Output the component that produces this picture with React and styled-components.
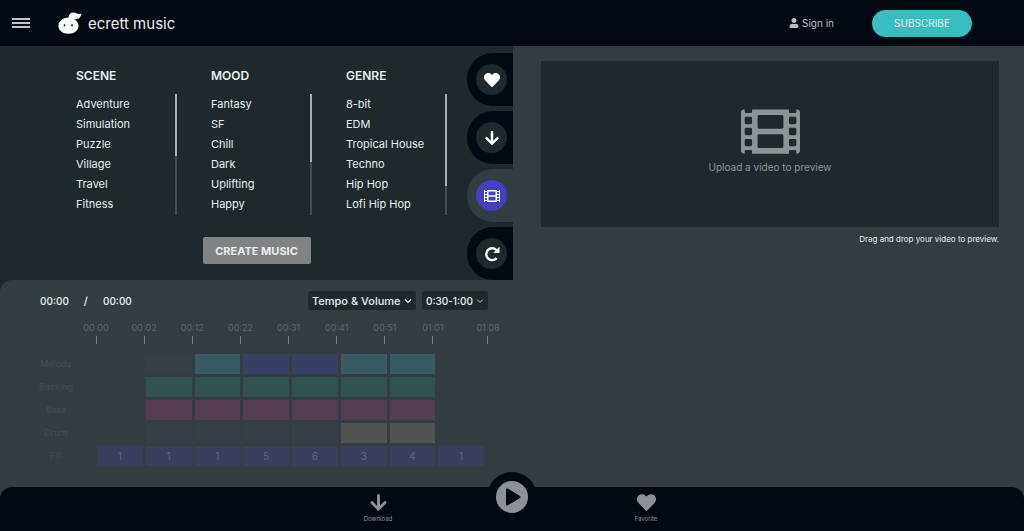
import React from "react";
import styled, { createGlobalStyle } from "styled-components";
import { FaHeart, FaArrowDown, FaFilm, FaUser, FaChevronDown } from "react-icons/fa";

const filters = [
  {
    title: "SCENE",
    thumb: 51,
    items: ["Adventure", "Simulation", "Puzzle", "Village", "Travel", "Fitness"],
  },
  {
    title: "MOOD",
    thumb: 56,
    items: ["Fantasy", "SF", "Chill", "Dark", "Uplifting", "Happy"],
  },
  {
    title: "GENRE",
    thumb: 76,
    items: ["8-bit", "EDM", "Tropical House", "Techno", "Hip Hop", "Lofi Hip Hop"],
  },
];

const marks = ["00:00", "00:02", "00:12", "00:22", "00:31", "00:41", "00:51", "01:01", "01:08"];

const off = "#373d45";
const teal = "#375b60";
const blue = "#393e63";
const green = "#31524c";
const pink = "#543c51";
const olive = "#505350";

const tracks = [
  { name: "Melody", cells: [null, off, teal, blue, blue, teal, teal, null] },
  { name: "Backing", cells: [null, green, green, green, green, green, green, null] },
  { name: "Bass", cells: [null, pink, pink, pink, pink, pink, pink, null] },
  { name: "Drum", cells: [null, off, off, off, off, olive, olive, null] },
];

const fills = ["1", "1", "1", "5", "6", "3", "4", "1"];

export default function App() {
  return (
    <Page>
      <GlobalStyle />
      <Header>
        <MenuButton aria-label="Menu">
          <span />
          <span />
          <span />
        </MenuButton>
        <Brand href="#">
          <Logo />
          ecrett music
        </Brand>
        <SignIn href="#">
          <FaUser />
          Sign in
        </SignIn>
        <Subscribe>SUBSCRIBE</Subscribe>
      </Header>
      <Main>
        <Left>
          <Picker>
            <Filters>
              {filters.map((filter) => (
                <Filter key={filter.title}>
                  <h2>{filter.title}</h2>
                  <div className="body">
                    <ul>
                      {filter.items.map((item) => (
                        <li key={item}>{item}</li>
                      ))}
                    </ul>
                    <ScrollTrack>
                      <div style={{ height: `${filter.thumb}%` }} />
                    </ScrollTrack>
                  </div>
                </Filter>
              ))}
              <CreateButton>CREATE MUSIC</CreateButton>
            </Filters>
            <Tabs>
              <Tab aria-label="Favorites">
                <span><FaHeart /></span>
              </Tab>
              <Tab aria-label="Downloads">
                <span><FaArrowDown /></span>
              </Tab>
              <Tab aria-label="Video" $active>
                <span><FaFilm /></span>
              </Tab>
              <Tab aria-label="History">
                <span><RedoIcon /></span>
              </Tab>
            </Tabs>
          </Picker>
          <Editor>
            <Controls>
              <time>00:00</time>
              <span>/</span>
              <time>00:00</time>
              <Selects>
                <SelectBox $wide>
                  <select aria-label="Edit mode" defaultValue="tempo">
                    <option value="tempo">Tempo &amp; Volume</option>
                  </select>
                  <FaChevronDown />
                </SelectBox>
                <SelectBox>
                  <select aria-label="Length" defaultValue="short">
                    <option value="short">0:30-1:00</option>
                  </select>
                  <ThinChevron />
                </SelectBox>
              </Selects>
            </Controls>
            <Ruler>
              {marks.map((mark) => (
                <span key={mark}>{mark}</span>
              ))}
            </Ruler>
            <Tracks>
              {tracks.map((track) => (
                <Track key={track.name}>
                  <TrackName>{track.name}</TrackName>
                  {track.cells.map((color, i) => (
                    <Cell key={i} $color={color} />
                  ))}
                </Track>
              ))}
              <Track>
                <TrackName>Fill</TrackName>
                {fills.map((fill, i) => (
                  <Cell key={i} $color="#3b3e5a">{fill}</Cell>
                ))}
              </Track>
            </Tracks>
          </Editor>
        </Left>
        <Right>
          <DropZone>
            <FaFilm />
            Upload a video to preview
          </DropZone>
          <p>Drag and drop your video to preview.</p>
        </Right>
      </Main>
      <Player>
        <PlayerButton>
          <FaArrowDown />
          Download
        </PlayerButton>
        <PlayButton aria-label="Play">
          <svg viewBox="0 0 32 32">
            <circle cx="16" cy="16" r="16" fill="#8d9196" />
            <path d="M10 8.500v15c0 .9.900 1.300 1.600.9l12.400-7.500c.7-.4.7-1.400 0-1.800l-12.400-7.500c-.7-.4-1.600 0-1.600.9z" fill="#010a12" />
          </svg>
        </PlayButton>
        <PlayerButton>
          <FaHeart />
          Favorite
        </PlayerButton>
      </Player>
    </Page>
  );
}

function Logo() {
  return (
    <svg viewBox="0 0 24 22" aria-hidden="true">
      <path
        d="M10.500 5.500C10.800 2.300 12.800.2 15.800.5c2 .2 3 1.500 4.800 1.500 1 0 1.900-.2 2.900-.6-.5 2.900-2 5-4.500 5.600-1.200.3-2.200.2-3 .4 3 1.200 4.500 3.400 4.500 6.300 0 4.500-4.200 8-10 8S.4 18.200.4 13.700c0-4.100 4-8 10.100-8.200z"
        fill="#fff"
      />
      <ellipse cx="6.500" cy="13.300" rx="0.900" ry="1.100" fill="#010a12" />
      <ellipse cx="14" cy="13.300" rx="0.900" ry="1.100" fill="#010a12" />
    </svg>
  );
}

function RedoIcon() {
  return (
    <svg width="16" height="16" viewBox="0 0 16 16" fill="none">
      <path d="M12.600 12.100A5.900 5.900 0 1 1 12.300 4" stroke="#fff" strokeWidth="2.400" />
      <path d="M15.500.8v6.200H9.300z" fill="#fff" />
    </svg>
  );
}

function ThinChevron() {
  return (
    <svg viewBox="0 0 10 10" fill="none" stroke="#c5cacc" strokeWidth="1.200">
      <path d="M1.500 3.200 5 6.700l3.500-3.500" />
    </svg>
  );
}

const GlobalStyle = createGlobalStyle`
  * {
    box-sizing: border-box;
    margin: 0;
    padding: 0;
  }
  body {
    background-color: #333c41;
    color: #e9eeee;
    font-family: Inter, "Noto Sans", sans-serif;
    font-size: 11px;
  }
  button, select {
    border: none;
    background: none;
    color: inherit;
    font: inherit;
    cursor: pointer;
  }
  a {
    color: inherit;
    text-decoration: none;
  }
`;

const Page = styled.div`
  min-height: 100vh;
  display: flex;
  flex-direction: column;
`;

const Header = styled.header`
  display: flex;
  align-items: center;
  height: 46px;
  padding: 0 52px 0 12px;
  background-color: #010a12;
`;

const MenuButton = styled.button`
  display: flex;
  flex-direction: column;
  gap: 2px;
  width: 18px;
  span {
    height: 2px;
    background-color: #bfc5c8;
  }
`;

const Brand = styled.a`
  display: flex;
  align-items: center;
  gap: 6px;
  margin-left: 28px;
  margin-right: auto;
  font-size: 15px;
  svg {
    width: 24px;
    height: 22px;
  }
`;

const SignIn = styled.a`
  display: flex;
  align-items: center;
  gap: 3px;
  margin-right: 38px;
  color: #b9bec1;
  font-size: 10px;
`;

const Subscribe = styled.button`
  width: 100px;
  height: 27px;
  border-radius: 14px;
  background-color: #38bdc2;
  font-size: 10px;
`;

const Main = styled.main`
  flex: 1;
  display: grid;
  grid-template-columns: calc(50% + 1px) 1fr;
`;

const Left = styled.div`
  display: flex;
  flex-direction: column;
  background-color: #1f282d;
`;

const Picker = styled.section`
  display: flex;
  justify-content: space-between;
`;

const Filters = styled.div`
  flex: 1;
  display: grid;
  grid-template-columns: repeat(3, 1fr);
  column-gap: 34px;
  padding: 22px 20px 16px 76px;
  align-content: start;
`;

const Filter = styled.div`
  h2 {
    margin-bottom: 10px;
    font-size: 12px;
    line-height: 16px;
    font-weight: 600;
  }
  .body {
    display: flex;
    justify-content: space-between;
    height: 121px;
  }
  ul {
    list-style: none;
    white-space: nowrap;
  }
  li {
    line-height: 20px;
  }
`;

const ScrollTrack = styled.div`
  width: 2px;
  background-color: #444c50;
  div {
    background-color: #a9afb2;
  }
`;

const CreateButton = styled.button`
  grid-column: 1 / -1;
  justify-self: center;
  width: 108px;
  height: 27px;
  margin-top: 22px;
  margin-right: 10px;
  border-radius: 2px;
  background-color: #808284;
  font-weight: 700;
`;

const Tabs = styled.nav`
  display: flex;
  flex-direction: column;
  gap: 5px;
  padding-top: 7px;
`;

const Tab = styled.button`
  display: flex;
  align-items: center;
  width: 46px;
  height: 53px;
  padding-left: 9px;
  border-radius: 26px 0 0 26px;
  background-color: ${(props) => (props.$active ? "#333c41" : "#010a12")};
  span {
    display: grid;
    place-items: center;
    width: 31px;
    height: 31px;
    border-radius: 50%;
    background-color: ${(props) => (props.$active ? "#443fbd" : "#1f282d")};
    color: #fff;
    font-size: 16px;
  }
`;

const Editor = styled.section`
  flex: 1;
  padding: 11px 25px 20px 33px;
  border-radius: 12px 0 0 0;
  background-color: #333c41;
`;

const Controls = styled.div`
  display: flex;
  align-items: center;
  gap: 15px;
  padding-left: 7px;
  font-weight: 500;
  time {
    font-size: 10px;
  }
`;

const Selects = styled.div`
  display: flex;
  gap: 6px;
  margin-left: auto;
`;

const SelectBox = styled.label`
  display: flex;
  align-items: center;
  width: ${(props) => (props.$wide ? "108px" : "66px")};
  height: 19px;
  padding: 0 4px;
  border-radius: 3px;
  background-color: #1f282d;
  font-size: ${(props) => (props.$wide ? "11px" : "10px")};
  select {
    flex: 1;
    min-width: 0;
    appearance: none;
    outline: none;
  }
  svg {
    flex: none;
    width: 8px;
    height: 8px;
  }
`;

const Ruler = styled.div`
  display: grid;
  grid-template-columns: repeat(7, 1fr) 55px 28px;
  margin: 12px -14px 0 49px;
  color: #5e666a;
  font-size: 9px;
  line-height: 12px;
  span {
    display: flex;
    flex-direction: column;
    align-items: center;
    gap: 2px;
    width: 28px;
  }
  span::after {
    content: "";
    width: 1px;
    height: 8px;
    background-color: #7a8184;
  }
`;

const Tracks = styled.div`
  display: flex;
  flex-direction: column;
  gap: 3px;
  margin: 10px 4px 0 0;
`;

const Track = styled.div`
  display: grid;
  grid-template-columns: 61px repeat(8, 1fr);
  column-gap: 3px;
  height: 20px;
`;

const TrackName = styled.div`
  width: 46px;
  background-color: #353b43;
  color: #434b51;
  font-size: 9px;
  line-height: 20px;
  text-align: center;
`;

const Cell = styled.div`
  background-color: ${(props) => props.$color || "transparent"};
  color: #60657a;
  font-size: 10px;
  line-height: 20px;
  text-align: center;
`;

const Right = styled.section`
  padding: 15px 25px 0 28px;
  p {
    margin-top: 7px;
    font-size: 8px;
    line-height: 10px;
    text-align: right;
  }
`;

const DropZone = styled.button`
  display: flex;
  flex-direction: column;
  align-items: center;
  justify-content: center;
  width: 100%;
  height: 166px;
  padding-bottom: 14px;
  background-color: #1f282d;
  color: #8e9395;
  font-size: 10px;
  svg {
    width: 59px;
    height: 59px;
  }
`;

const Player = styled.footer`
  display: flex;
  justify-content: center;
  gap: 69px;
  height: 44px;
  border-radius: 12px 12px 0 0;
  background-color: #010a12;
  color: #8d9196;
`;

const PlayerButton = styled.button`
  display: flex;
  flex-direction: column;
  align-items: center;
  gap: 3px;
  width: 80px;
  padding-top: 6px;
  font-size: 6px;
  svg {
    font-size: 19px;
  }
`;

const PlayButton = styled.button`
  display: grid;
  place-items: center;
  width: 50px;
  height: 50px;
  margin-top: -15px;
  border-radius: 50%;
  background-color: #010a12;
  svg {
    width: 32px;
    height: 32px;
  }
`;
